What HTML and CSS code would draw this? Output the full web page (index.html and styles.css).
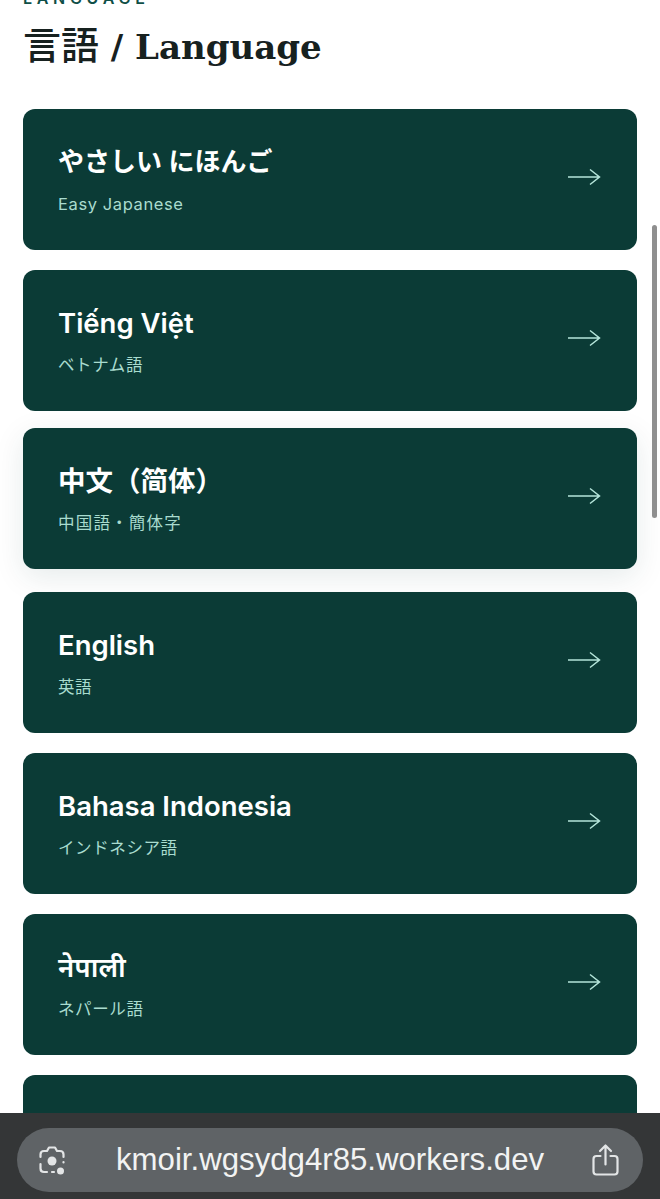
FILE: index.html
```html
<!DOCTYPE html>
<html lang="ja">
<head>
<meta charset="utf-8">
<title>Language</title>
<link rel="stylesheet" href="styles.css">
</head>
<body>
<main class="page">
  <p class="eyebrow">LANGUAGE</p>
  <h1 class="title"><span class="title-cjk">言語</span> / Language</h1>
  <ul class="list">
    <li class="card"><div><p class="name name-kana">やさしい にほんご</p><p class="sub">Easy Japanese</p></div><svg class="arrow" viewBox="0 0 34 20"><path d="M1 10H32M23 2.500L32.500 10L23 17.500"/></svg></li>
    <li class="card"><div><p class="name">Tiếng Việt</p><p class="sub">ベトナム語</p></div><svg class="arrow" viewBox="0 0 34 20"><path d="M1 10H32M23 2.500L32.500 10L23 17.500"/></svg></li>
    <li class="card card-near"><div><p class="name">中文（简体）</p><p class="sub sub-wide">中国語・簡体字</p></div><svg class="arrow" viewBox="0 0 34 20"><path d="M1 10H32M23 2.500L32.500 10L23 17.500"/></svg></li>
    <li class="card card-far"><div><p class="name">English</p><p class="sub">英語</p></div><svg class="arrow" viewBox="0 0 34 20"><path d="M1 10H32M23 2.500L32.500 10L23 17.500"/></svg></li>
    <li class="card"><div><p class="name">Bahasa Indonesia</p><p class="sub">インドネシア語</p></div><svg class="arrow" viewBox="0 0 34 20"><path d="M1 10H32M23 2.500L32.500 10L23 17.500"/></svg></li>
    <li class="card"><div><p class="name">नेपाली</p><p class="sub">ネパール語</p></div><svg class="arrow" viewBox="0 0 34 20"><path d="M1 10H32M23 2.500L32.500 10L23 17.500"/></svg></li>
    <li class="card"></li>
  </ul>
</main>
<div class="scrollbar"></div>
<footer class="browser-bar">
  <div class="url-pill">
    <svg class="bar-icon lens" viewBox="0 0 28 32"><path d="M2.500 13V10.500Q2.500 7 6 7H9L11 3.500H17L19 7H22Q25.500 7 25.500 10.500V13M25.500 18.500V18M2.500 20V24.500Q2.500 28 6 28H9M14 28H16"/><circle class="fill" cx="14" cy="17" r="4.500"/><circle class="fill" cx="22.500" cy="27" r="3.500"/></svg>
    <span class="url">kmoir.wgsydg4r85.workers.dev</span>
    <svg class="bar-icon share" viewBox="0 0 28 34"><path d="M9 13H5Q2 13 2 16V28.500Q2 31.500 5 31.500H23Q26 31.500 26 28.500V16Q26 13 23 13H19M14 21.500V2.500M8.500 8L14 2.500L19.500 8"/></svg>
  </div>
</footer>
</body>
</html>
```
FILE: styles.css
```css
* { box-sizing: border-box; }
html, body { margin: 0; height: 1199px; overflow: hidden; background: #fff; }
body { position: relative; font-family: Inter, "Noto Sans CJK JP", "Noto Sans", sans-serif; }
p, h1, ul { margin: 0; padding: 0; }
.page { padding: 0 23px; margin-top: -11px; }
.eyebrow { font-size: 16px; line-height: 18px; font-weight: 600; letter-spacing: 4.700px; color: #0f4f47; white-space: nowrap; }
.title { margin-top: 15px; font-family: "DejaVu Serif", "Noto Sans CJK JP", serif; font-size: 34px; line-height: 48px; font-weight: 700; color: #17211f; white-space: nowrap; }
.title-cjk { font-size: 38px; font-weight: 500; }
.list { list-style: none; margin-top: 38px; display: flex; flex-direction: column; gap: 20px; }
.card { height: 141px; padding: 0 36px 0 35px; border-radius: 12px; background: #0b3b36; display: flex; align-items: center; justify-content: space-between; flex: none; }
.card-near { margin-top: -3px; box-shadow: 0 8px 30px rgba(11, 59, 54, .1); }
.card-far { margin-top: 3px; }
.name { font-size: 27.500px; line-height: 34px; font-weight: 600; color: #fff; white-space: nowrap; }
.name-kana { font-size: 26px; }
.sub { margin-top: 14.500px; font-size: 16.500px; line-height: 20px; letter-spacing: .6px; color: #a9dccf; }
.sub-wide { letter-spacing: 1.200px; }
.arrow { width: 34px; height: 20px; margin-bottom: 6px; flex: none; fill: none; stroke: #b5e5da; stroke-width: 1.500; }
.scrollbar { position: absolute; top: 225px; right: 3px; width: 5px; height: 293px; border-radius: 3px; background: #8f8f8f; }
.browser-bar { position: absolute; left: 0; right: 0; top: 1113px; height: 86px; padding: 15px 17px 7px 17px; background: #343637; }
.url-pill { height: 64px; border-radius: 32px; background: #5f6366; display: flex; align-items: center; padding: 0 23px 0 20px; }
.url { margin-left: 49px; font-family: "Liberation Sans", sans-serif; font-size: 31.200px; color: #f2f3f3; white-space: nowrap; flex: 1; }
.bar-icon { flex: none; fill: none; stroke: #e3e5e6; stroke-width: 2.200; stroke-linecap: round; stroke-linejoin: round; }
.bar-icon .fill { fill: #e3e5e6; stroke: none; }
.lens { width: 30px; height: 32px; }
.share { width: 29px; height: 34px; }
```
